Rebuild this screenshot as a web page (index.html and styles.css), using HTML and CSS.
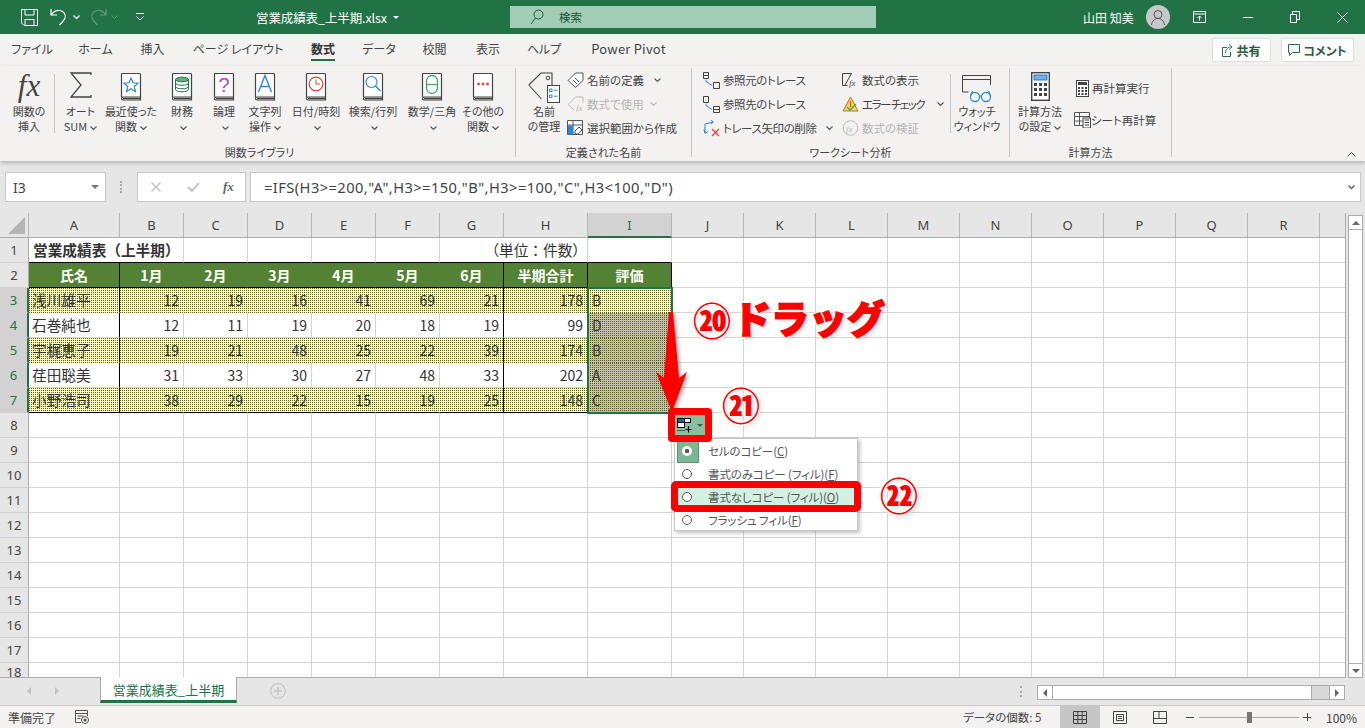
FILE: index.html
```html
<!DOCTYPE html>
<html lang="ja">
<head>
<meta charset="utf-8">
<title>営業成績表_上半期.xlsx - Excel</title>
<link rel="stylesheet" href="styles.css">
</head>
<body>
<svg class="defs" width="0" height="0" aria-hidden="true">
  <defs>
    <symbol id="book" viewBox="0 0 22 29">
      <path d="M1.500 25V2.500q0-1 1-1h17q1 0 1 1v25.500H3q-1.500 0-1.500-1.500T3 25h17.500" fill="#fff" stroke="#444" stroke-width="1.200"/>
      <path d="M3 26.500h17.500" stroke="#444" stroke-width="1.500"/>
    </symbol>
    <symbol id="chev" viewBox="0 0 7 4">
      <path d="M.5.5l3 3 3-3" fill="none" stroke="#555" stroke-width="1.100"/>
    </symbol>
    <symbol id="chevg" viewBox="0 0 7 4">
      <path d="M.5.5l3 3 3-3" fill="none" stroke="#bbb" stroke-width="1.100"/>
    </symbol>
  </defs>
</svg>
<div class="app">
  <header class="titlebar">
    <div class="qat">
      <svg class="i-save" width="17" height="17" viewBox="0 0 17 17"><path d="M.5.500h16v16H3L.5 14z" fill="none" stroke="#fff"/><path d="M4 .5v5.500h9V.5M4 16.500V10.500h9v6" fill="none" stroke="#fff"/></svg>
      <svg class="i-undo" width="18" height="18" viewBox="0 0 18 18"><path d="M1 1v6h6M1.500 6.500C4 3 7 2 10 2.500c4 .8 6 4 5 7.500-.7 2-2.500 4-5.500 7" fill="none" stroke="#fff" stroke-width="1.200"/></svg>
      <svg class="i-cv" width="7" height="4" viewBox="0 0 7 4"><path d="M.5.5l3 3 3-3" fill="none" stroke="#fff" stroke-width="1.200"/></svg>
      <svg class="i-redo" width="18" height="18" viewBox="0 0 18 18"><path d="M17 1v6h-6M16.500 6.500C14 3 11 2 8 2.500c-4 .8-6 4-5 7.500.7 2 2.500 4 5.500 7" fill="none" stroke="#5f9c7c" stroke-width="1.200"/></svg>
      <svg class="i-cv2" width="7" height="4" viewBox="0 0 7 4"><path d="M.5.5l3 3 3-3" fill="none" stroke="#5f9c7c"/></svg>
      <svg class="i-cust" width="8" height="8" viewBox="0 0 8 8"><path d="M0 .5h8M.5 3.500L4 7l3.500-3.500" fill="none" stroke="#fff"/></svg>
    </div>
    <div class="docname">営業成績表_上半期.xlsx<span class="caret-w"></span></div>
    <div class="search">
      <svg width="14" height="16" viewBox="0 0 14 16"><circle cx="8.500" cy="5.500" r="4.500" fill="none" stroke="#1e5c3a"/><path d="M5.500 9L1 15" stroke="#1e5c3a"/></svg>
      <span>検索</span>
    </div>
    <div class="user">山田 知美</div>
    <div class="avatar"><svg width="24" height="24" viewBox="0 0 24 24"><circle cx="12" cy="12" r="12" fill="#c8c8c8"/><circle cx="12" cy="9.500" r="4" fill="none" stroke="#555"/><path d="M5.500 20c.5-4 3-6.500 6.500-6.500s6 2.500 6.500 6.500" fill="none" stroke="#555"/></svg></div>
    <div class="winbtns">
      <svg width="13" height="12" viewBox="0 0 13 12"><path d="M.5.500h12v11H.5zM.5 3h12M6.500 9.500V5M4.500 7l2-2 2 2" fill="none" stroke="#fff"/></svg>
      <svg width="10" height="1" viewBox="0 0 10 1"><path d="M0 .5h10" stroke="#fff"/></svg>
      <svg width="10" height="12" viewBox="0 0 10 12"><path d="M.5 3.500h6v8h-6zM2.500 3.500v-3h7v8h-3" fill="none" stroke="#fff"/></svg>
      <svg width="11" height="11" viewBox="0 0 11 11"><path d="M.5.500l10 10M10.500.500l-10 10" stroke="#fff"/></svg>
    </div>
  </header>

  <nav class="tabs">
    <span>ファイル</span><span>ホーム</span><span>挿入</span><span>ページ レイアウト</span><span class="on">数式</span><span>データ</span><span>校閲</span><span>表示</span><span>ヘルプ</span><span class="pp">Power Pivot</span>
    <div class="tab-actions">
      <button class="share"><svg width="11" height="13" viewBox="0 0 11 13"><path d="M5 3.500H.5v9h8V8M3.500 9c0-3.500 2.500-6 5-6M7 .5l3 2.500-3 2.500" fill="none" stroke="#217346"/></svg>共有</button>
      <button class="comment"><svg width="12" height="12" viewBox="0 0 12 12"><path d="M.5.500h11v8H4.500l-3 3v-3h-1z" fill="none" stroke="#217346"/></svg>コメント</button>
    </div>
  </nav>

  <section class="ribbon">
    <div class="group g1">
      <div class="gbody">
        <div class="big w50"><div class="ic fx">fx</div><div class="lb">関数の<br>挿入</div></div>
        <div class="vsep"></div>
        <div class="big w51"><div class="ic"><svg width="22" height="26" viewBox="0 0 22 26"><path d="M21 3V1H1l10 12L1 25h20v-2" fill="none" stroke="#444" stroke-width="1.300"/></svg></div><div class="lb">オート<br>SUM<svg class="cv" width="7" height="4"><use href="#chev"/></svg></div></div>
        <div class="big w50"><div class="ic"><svg width="22" height="29"><use href="#book"/><path d="M11 6l2 4.800 5 .4-3.800 3.300 1.200 5L11 16.800 6.600 19.500l1.200-5L4 11.200l5-.4z" fill="none" stroke="#2b88d8" stroke-width="1.200"/></svg></div><div class="lb">最近使った<br>関数<svg class="cv" width="7" height="4"><use href="#chev"/></svg></div></div>
        <div class="big w52"><div class="ic"><svg width="22" height="29"><use href="#book"/><ellipse cx="11" cy="7.500" rx="6.500" ry="2.300" fill="#5fb37f" stroke="#217346"/><path d="M4.500 7.500v10c0 3 13 3 13 0v-10M4.500 11c0 3 13 3 13 0M4.500 14.500c0 3 13 3 13 0" fill="none" stroke="#217346"/></svg></div><div class="lb">財務<br><svg class="cv" width="7" height="4"><use href="#chev"/></svg></div></div>
        <div class="big w32"><div class="ic"><svg width="22" height="29"><use href="#book"/><text x="11" y="20" class="q">?</text></svg></div><div class="lb">論理<br><svg class="cv" width="7" height="4"><use href="#chev"/></svg></div></div>
        <div class="big w50"><div class="ic"><svg width="22" height="29"><use href="#book"/><path d="M4.500 20L11 3.500 17.500 20M6.500 14.500h9" fill="none" stroke="#2b88d8" stroke-width="1.400"/></svg></div><div class="lb">文字列<br>操作<svg class="cv" width="7" height="4"><use href="#chev"/></svg></div></div>
        <div class="big w52"><div class="ic"><svg width="22" height="29"><use href="#book"/><circle cx="11" cy="12" r="6.800" fill="none" stroke="#e8413c" stroke-width="1.200"/><path d="M11 7.500V12h4" fill="none" stroke="#e8413c"/></svg></div><div class="lb nw">日付/時刻<br><svg class="cv" width="7" height="4"><use href="#chev"/></svg></div></div>
        <div class="big w62"><div class="ic"><svg width="22" height="29"><use href="#book"/><circle cx="9.500" cy="10" r="5.500" fill="none" stroke="#2b88d8" stroke-width="1.200"/><path d="M13.500 14l5 5" stroke="#2b88d8" stroke-width="1.400"/></svg></div><div class="lb nw">検索/行列<br><svg class="cv" width="7" height="4"><use href="#chev"/></svg></div></div>
        <div class="big w56"><div class="ic"><svg width="22" height="29"><use href="#book"/><rect x="5.500" y="3.500" width="11" height="18" rx="5.500" fill="none" stroke="#3fa66a" stroke-width="1.300"/><path d="M5.500 12.500h11" stroke="#3fa66a" stroke-width="1.300"/></svg></div><div class="lb nw">数学/三角<br><svg class="cv" width="7" height="4"><use href="#chev"/></svg></div></div>
        <div class="big w46"><div class="ic"><svg width="22" height="29"><use href="#book"/><circle cx="6.500" cy="12" r="1.400" fill="#e8413c"/><circle cx="11" cy="12" r="1.400" fill="#e8413c"/><circle cx="15.500" cy="12" r="1.400" fill="#e8413c"/></svg></div><div class="lb nw">その他の<br>関数<svg class="cv" width="7" height="4"><use href="#chev"/></svg></div></div>
      </div>
      <div class="glabel">関数ライブラリ</div>
    </div>

    <div class="group g2">
      <div class="gbody">
        <div class="big wname"><div class="ic"><svg width="32" height="32" viewBox="0 0 32 32"><path d="M.8 13L13 1h11v13M13.500 27L.8 13" fill="none" stroke="#444" stroke-width="1.100"/><circle cx="20" cy="6" r="1.800" fill="none" stroke="#444"/><rect x="19.500" y="13.500" width="12" height="17" fill="#fff" stroke="#444"/><path d="M21.500 17h2.500v2.500h-2.500zM21.500 23h2.500v2.500h-2.500z" fill="none" stroke="#2b88d8"/><path d="M26 18.200h3.500M26 24.200h3.500" stroke="#2b88d8"/></svg></div><div class="lb">名前<br>の管理</div></div>
        <div class="smalls">
          <div class="sm"><svg width="17" height="16" viewBox="0 0 17 16"><path d="M1 8.500L8.500 1H16v7.500L8.500 15.500zM6 8l4 4M8 6l4 4" fill="#fff" stroke="#555"/></svg>名前の定義<svg class="cv2" width="7" height="4"><use href="#chev"/></svg></div>
          <div class="sm dis"><svg width="17" height="16" viewBox="0 0 17 16"><path d="M1 8.500L8.500 1H16v5M7 14L1 8.500" fill="none" stroke="#bbb"/><text x="9" y="15" class="fxs">fx</text></svg>数式で使用<svg class="cv3" width="7" height="4"><use href="#chevg"/></svg></div>
          <div class="sm"><svg width="17" height="16" viewBox="0 0 17 16"><path d="M.5.500h15v14H.5zM.5 5h15M6 .5v14" fill="#fff" stroke="#555"/><rect x="1" y="5.500" width="5" height="9" fill="#2b88d8"/><path d="M8 11l4-4 3 3-4 4H8z" fill="#fff" stroke="#555"/></svg>選択範囲から作成</div>
        </div>
      </div>
      <div class="glabel">定義された名前</div>
    </div>

    <div class="group g3">
      <div class="gbody">
        <div class="smalls c1">
          <div class="sm"><svg width="17" height="17" viewBox="0 0 17 17"><path d="M.5.500h5v6h-5zM.5 3.500h5M10.500 10.500h6v6h-6z" fill="none" stroke="#444"/><path d="M3 7.500v2l6 4" fill="none" stroke="#2b88d8"/></svg>参照元のトレース</div>
          <div class="sm"><svg width="17" height="17" viewBox="0 0 17 17"><path d="M.5.500h5v6h-5zM10.500 10.500h6v6h-6zM10.500 13.500h6" fill="none" stroke="#444"/><path d="M3 7.500v2l6 4" fill="none" stroke="#2b88d8"/></svg>参照先のトレース</div>
          <div class="sm"><svg width="17" height="17" viewBox="0 0 17 17"><path d="M2 13V4l8-2M8 0l2.500 2L8 4M1 9.500l1 4 3-2" fill="none" stroke="#2b88d8"/><path d="M9 9l7 7M16 9l-7 7" stroke="#e8413c" stroke-width="1.300"/></svg>トレース矢印の削除<svg class="cv4" width="7" height="4"><use href="#chev"/></svg></div>
        </div>
        <div class="smalls c2">
          <div class="sm"><svg width="17" height="16" viewBox="0 0 17 16"><path d="M.5 1.500h9M.5 1.500v12h5M9.500 1.500L3 13" fill="none" stroke="#444"/><text x="7" y="14" class="fxd">fx</text></svg>数式の表示</div>
          <div class="sm ec"><svg width="17" height="16" viewBox="0 0 17 16"><path d="M8.500 1L1 15h15z" fill="#f4d35e" stroke="#c4721c"/><path d="M8.500 5v6" stroke="#c4721c" stroke-width="1.400"/><path d="M5 11l3 3 6-6" fill="none" stroke="#3fa66a" stroke-width="1.300"/></svg>エラー チェック<svg class="cv5" width="7" height="4"><use href="#chev"/></svg></div>
          <div class="sm dis"><svg width="17" height="16" viewBox="0 0 17 16"><circle cx="8.500" cy="8" r="7.300" fill="none" stroke="#bbb"/><text x="4" y="12" class="fxg">fx</text></svg>数式の検証</div>
        </div>
        <div class="vsep2"></div>
        <div class="big wwatch"><div class="ic"><svg width="30" height="29" viewBox="0 0 30 29"><path d="M.5 17V.5h28V10M.5 4.500h28M.5 17h6" fill="none" stroke="#444"/><circle cx="13" cy="22" r="4.500" fill="#fff" stroke="#2b88d8" stroke-width="1.300"/><circle cx="24" cy="22" r="4.500" fill="#fff" stroke="#2b88d8" stroke-width="1.300"/><path d="M17.500 21h2M8.500 21l2-5M28.500 21l-2-5" fill="none" stroke="#2b88d8" stroke-width="1.200"/></svg></div><div class="lb nw">ウォッチ<br>ウィンドウ</div></div>
      </div>
      <div class="glabel">ワークシート分析</div>
    </div>

    <div class="group g4">
      <div class="gbody">
        <div class="big wcalc"><div class="ic"><svg width="19" height="29" viewBox="0 0 19 29"><rect x=".7" y=".7" width="17.600" height="27.600" fill="#fff" stroke="#444" stroke-width="1.400"/><rect x="3" y="3" width="13" height="5" fill="#6fb0e6" stroke="#2b78c2"/><path d="M3 11h3v3H3zM8 11h3v3H8zM13 11h3v3h-3zM3 16h3v3H3zM8 16h3v3H8zM13 16h3v3h-3zM3 21h3v3H3zM8 21h3v3H8zM13 21h3v3h-3z" fill="#444"/></svg></div><div class="lb nw">計算方法<br>の設定<svg class="cv" width="7" height="4"><use href="#chev"/></svg></div></div>
        <div class="smalls c3">
          <div class="sm"><svg width="13" height="17" viewBox="0 0 13 17"><rect x=".5" y=".5" width="12" height="16" fill="#fff" stroke="#444"/><rect x="2" y="2" width="9" height="3" fill="#444"/><path d="M2 7h2v2H2zM5.500 7h2v2h-2zM9 7h2v2H9zM2 10h2v2H2zM5.500 10h2v2h-2zM9 10h2v2H9zM2 13h2v2H2zM5.500 13h2v2h-2zM9 13h2v2H9z" fill="#444"/></svg>再計算実行</div>
          <div class="sm s2"><svg width="17" height="16" viewBox="0 0 17 16"><path d="M.5.500h15v13H.5zM.5 4.500h15M5.500.5v13M.5 9h8" fill="#fff" stroke="#555"/><rect x="9" y="6" width="7.500" height="10" fill="#fff" stroke="#444"/><path d="M10.500 8h4.500M10.500 10.500h4.500M10.500 13h4.500" stroke="#444" stroke-width="1.200"/></svg>シート再計算</div>
        </div>
      </div>
      <div class="glabel">計算方法</div>
    </div>
    <svg class="collapse" width="9" height="5" viewBox="0 0 9 5"><path d="M.5 4.500l4-4 4 4" fill="none" stroke="#444"/></svg>
  </section>

  <section class="fbar">
    <div class="namebox">I3<span class="caret-g"></span></div>
    <div class="fdots"></div>
    <div class="fbtns">
      <svg width="10" height="10" viewBox="0 0 10 10"><path d="M.5.500l9 9M9.500.500l-9 9" stroke="#c0c0c0" stroke-width="1.400"/></svg>
      <svg width="13" height="10" viewBox="0 0 13 10"><path d="M1 5l4 4 7-8" fill="none" stroke="#c0c0c0" stroke-width="1.800"/></svg>
      <span class="ffx">fx</span>
    </div>
    <div class="finput"><span>=IFS(H3&gt;=200,"A",H3&gt;=150,"B",H3&gt;=100,"C",H3&lt;100,"D")</span>
      <svg width="7" height="5" viewBox="0 0 7 5"><path d="M.5.500l3 3 3-3" fill="none" stroke="#666" stroke-width="1.500"/></svg>
    </div>
  </section>

  <section class="sheetarea">
    <div class="grid">
      <table>
        <colgroup><col class="crh"><col class="ca"><col class="cb"><col class="cb"><col class="cb"><col class="cb"><col class="cb"><col class="cb"><col class="ch"><col class="ch"><col class="cj"><col class="cj"><col class="cj"><col class="cj"><col class="cj"><col class="cj"><col class="cj"><col class="cj"><col class="cj"><col class="cs"></colgroup>
        <tr class="colhead"><th class="corner"><span></span></th><th>A</th><th>B</th><th>C</th><th>D</th><th>E</th><th>F</th><th>G</th><th>H</th><th class="sel">I</th><th>J</th><th>K</th><th>L</th><th>M</th><th>N</th><th>O</th><th>P</th><th>Q</th><th>R</th><th></th></tr>
        <tr class="r1"><th class="rh">1</th><td colspan="2" class="title">営業成績表（上半期）</td><td></td><td></td><td></td><td></td><td colspan="2" class="unit">（単位：件数）</td><td></td><td></td><td></td><td></td><td></td><td></td><td></td><td></td><td></td><td></td><td></td></tr>
        <tr class="head"><th class="rh">2</th><td class="bk">氏名</td><td>1月</td><td>2月</td><td>3月</td><td>4月</td><td>5月</td><td class="bk">6月</td><td class="bk">半期合計</td><td class="bk">評価</td><td></td><td></td><td></td><td></td><td></td><td></td><td></td><td></td><td></td><td></td></tr>
        <tr class="d p"><th class="rh sel">3</th><td class="t bk">浅川雄平</td><td>12</td><td>19</td><td>16</td><td>41</td><td>69</td><td class="bk">21</td><td class="bk">178</td><td class="t e">B</td><td></td><td></td><td></td><td></td><td></td><td></td><td></td><td></td><td></td><td></td></tr>
        <tr class="d"><th class="rh sel">4</th><td class="t bk">石巻純也</td><td>12</td><td>11</td><td>19</td><td>20</td><td>18</td><td class="bk">19</td><td class="bk">99</td><td class="t e">D</td><td></td><td></td><td></td><td></td><td></td><td></td><td></td><td></td><td></td><td></td></tr>
        <tr class="d p"><th class="rh sel">5</th><td class="t bk">宇梶恵子</td><td>19</td><td>21</td><td>48</td><td>25</td><td>22</td><td class="bk">39</td><td class="bk">174</td><td class="t e">B</td><td></td><td></td><td></td><td></td><td></td><td></td><td></td><td></td><td></td><td></td></tr>
        <tr class="d"><th class="rh sel">6</th><td class="t bk">荏田聡美</td><td>31</td><td>33</td><td>30</td><td>27</td><td>48</td><td class="bk">33</td><td class="bk">202</td><td class="t e">A</td><td></td><td></td><td></td><td></td><td></td><td></td><td></td><td></td><td></td><td></td></tr>
        <tr class="d p last"><th class="rh sel">7</th><td class="t bk">小野浩司</td><td>38</td><td>29</td><td>22</td><td>15</td><td>19</td><td class="bk">25</td><td class="bk">148</td><td class="t e">C</td><td></td><td></td><td></td><td></td><td></td><td></td><td></td><td></td><td></td><td></td></tr>
        <tr><th class="rh">8</th><td></td><td></td><td></td><td></td><td></td><td></td><td></td><td></td><td></td><td></td><td></td><td></td><td></td><td></td><td></td><td></td><td></td><td></td><td></td></tr>
        <tr><th class="rh">9</th><td></td><td></td><td></td><td></td><td></td><td></td><td></td><td></td><td></td><td></td><td></td><td></td><td></td><td></td><td></td><td></td><td></td><td></td><td></td></tr>
        <tr><th class="rh">10</th><td></td><td></td><td></td><td></td><td></td><td></td><td></td><td></td><td></td><td></td><td></td><td></td><td></td><td></td><td></td><td></td><td></td><td></td><td></td></tr>
        <tr><th class="rh">11</th><td></td><td></td><td></td><td></td><td></td><td></td><td></td><td></td><td></td><td></td><td></td><td></td><td></td><td></td><td></td><td></td><td></td><td></td><td></td></tr>
        <tr><th class="rh">12</th><td></td><td></td><td></td><td></td><td></td><td></td><td></td><td></td><td></td><td></td><td></td><td></td><td></td><td></td><td></td><td></td><td></td><td></td><td></td></tr>
        <tr><th class="rh">13</th><td></td><td></td><td></td><td></td><td></td><td></td><td></td><td></td><td></td><td></td><td></td><td></td><td></td><td></td><td></td><td></td><td></td><td></td><td></td></tr>
        <tr><th class="rh">14</th><td></td><td></td><td></td><td></td><td></td><td></td><td></td><td></td><td></td><td></td><td></td><td></td><td></td><td></td><td></td><td></td><td></td><td></td><td></td></tr>
        <tr><th class="rh">15</th><td></td><td></td><td></td><td></td><td></td><td></td><td></td><td></td><td></td><td></td><td></td><td></td><td></td><td></td><td></td><td></td><td></td><td></td><td></td></tr>
        <tr><th class="rh">16</th><td></td><td></td><td></td><td></td><td></td><td></td><td></td><td></td><td></td><td></td><td></td><td></td><td></td><td></td><td></td><td></td><td></td><td></td><td></td></tr>
        <tr><th class="rh">17</th><td></td><td></td><td></td><td></td><td></td><td></td><td></td><td></td><td></td><td></td><td></td><td></td><td></td><td></td><td></td><td></td><td></td><td></td><td></td></tr>
        <tr class="r18"><th class="rh">18</th><td></td><td></td><td></td><td></td><td></td><td></td><td></td><td></td><td></td><td></td><td></td><td></td><td></td><td></td><td></td><td></td><td></td><td></td><td></td></tr>
      </table>
    </div>
    <div class="vscroll">
      <div class="sbtn"><span class="tri-up"></span></div>
      <div class="vthumb"></div>
      <div class="sbtn"><span class="tri-dn"></span></div>
    </div>
  </section>

  <section class="sheettabs">
    <div class="tabnav"><span class="tl"></span><span class="tr"></span></div>
    <div class="sheettab">営業成績表_上半期</div>
    <svg class="addsheet" width="16" height="16" viewBox="0 0 16 16"><circle cx="8" cy="8" r="7.300" fill="none" stroke="#c6c6c6" stroke-width="1.200"/><path d="M8 4v8M4 8h8" stroke="#c6c6c6" stroke-width="1.600"/></svg>
    <div class="spacer"></div>
    <div class="hdots"></div>
    <div class="hscroll">
      <div class="hbtn"><span class="tl dk"></span></div>
      <div class="hthumb"></div>
      <div class="htrack"></div>
      <div class="hbtn rb"><span class="tr dk"></span></div>
    </div>
  </section>

  <footer class="status">
    <span class="ready">準備完了</span>
    <svg class="macro" width="14" height="14" viewBox="0 0 14 14"><path d="M6 12.500H.5V.5h12V6M.5 3.500h12M2.500 6h6M2.500 8.500h3" fill="none" stroke="#555"/><circle cx="10" cy="10" r="3.500" fill="none" stroke="#555"/><circle cx="10" cy="10" r="1.500" fill="#555"/></svg>
    <div class="spacer"></div>
    <span class="count">データの個数: 5</span>
    <div class="view on"><svg width="14" height="13" viewBox="0 0 14 13"><path d="M.5.500h13v12H.5zM.5 4.500h13M.5 8.500h13M4.800.5v12M9.200.5v12" fill="none" stroke="#444"/></svg></div>
    <div class="view"><svg width="14" height="13" viewBox="0 0 14 13"><path d="M.5.500h13v12H.5zM3.500 3.500h7v6h-7zM5 5.500h4M5 7.500h4" fill="none" stroke="#444"/></svg></div>
    <div class="view"><svg width="14" height="13" viewBox="0 0 14 13"><path d="M.5.500h13v12H.5zM.5 7.500h13M6 .5v7" fill="none" stroke="#444"/></svg></div>
    <div class="zoom">
      <span class="zm"></span>
      <div class="slider"><span class="knob"></span></div>
      <span class="zp"></span>
    </div>
    <span class="pct">100%</span>
  </footer>

  <!-- overlays -->
  <div class="selrange"></div>
  <div class="seldim"></div>
  <svg class="arrow" width="36" height="104" viewBox="0 0 36 104"><path d="M15 2h4L25 68l8-6-15 40L2 62l8 6z" fill="#ff0000"/></svg>
  <div class="anno a20">⑳</div>
  <div class="anno drag">ドラッグ</div>
  <div class="anno a21">㉑</div>
  <div class="anno a22">㉒</div>
  <div class="pastebtn">
    <svg width="16" height="15" viewBox="0 0 16 15"><rect x=".5" y=".5" width="7" height="4" fill="#1f5fd0" stroke="#000"/><rect x="7.500" y=".5" width="6" height="4" fill="#fff" stroke="#000"/><rect x=".5" y="4.500" width="7" height="5" fill="#fff" stroke="#000"/><path d="M.5 12.500h7" stroke="#000" stroke-dasharray="1 1"/><path d="M11.500 8v6.500M8.500 11.500h6" stroke="#000" stroke-width="1.200"/></svg>
    <span class="caret-d"></span>
  </div>
  <div class="fillmenu">
    <div class="mi"><span class="rad chk"><i></i></span>セルのコピー(<u>C</u>)</div>
    <div class="mi"><span class="rad"></span>書式のみコピー (フィル)(<u>F</u>)</div>
    <div class="mi hi"><span class="rad"></span>書式なしコピー (フィル)(<u>O</u>)</div>
    <div class="mi"><span class="rad"></span>フラッシュ フィル(<u>F</u>)</div>
  </div>
  <div class="redbox"></div>
</div>
</body>
</html>
```

FILE: styles.css
```css
* { box-sizing: border-box; }
html, body { margin: 0; padding: 0; height: 100%; overflow: hidden; background: #e6e6e6; }
body { font-family: "Noto Sans CJK JP", "Noto Sans", sans-serif; font-feature-settings: "palt"; color: #444; }
.defs { position: absolute; }
.app { position: relative; width: 1365px; height: 728px; overflow: hidden; display: flex; flex-direction: column; }

/* title bar */
.titlebar { height: 34px; background: #217346; color: #fff; display: flex; align-items: center; font-size: 12px; flex: none; }
.qat { width: 256px; display: flex; align-items: center; padding-left: 21px; flex: none; }
.qat svg { flex: none; }
.i-save { margin-right: 12px; }
.i-cv { margin: 0 0 0 5px; }
.i-redo { margin-left: 9px; }
.i-cv2 { margin-left: 4px; }
.i-cust { margin-left: 18px; }
.docname { width: 254px; flex: none; display: flex; align-items: center; font-size: 12.500px; letter-spacing: -.1px; }
.caret-w { width: 0; height: 0; border: 3px solid transparent; border-top: 3px solid #fff; border-bottom: 0; margin-left: 6px; }
.search { width: 366px; height: 22px; background: #a1cdb5; color: #1e4e33; display: flex; align-items: center; padding-left: 20px; flex: none; font-size: 11.500px; }
.search span { margin-left: 15px; }
.user { margin-left: 207px; width: 61px; font-size: 12px; flex: none; }
.avatar { width: 24px; height: 24px; flex: none; margin-left: 2px; }
.winbtns { display: flex; align-items: center; flex: 1; padding-left: 23px; gap: 0; justify-content: space-between; padding-right: 17px; }

/* ribbon tabs */
.tabs { height: 32px; background: #f3f2f1; display: grid; grid-template-columns: 64px 63px 51px 120px 50px 62px 49px 58px 54px 115px 1fr; align-items: center; justify-items: center; font-size: 12px; color: #444; flex: none; }
.tabs > span { position: relative; height: 32px; line-height: 30px; white-space: nowrap; }
.tabs .on { font-weight: 700; color: #333; }
.tabs .on::after { content: ""; position: absolute; left: 0; right: 0; bottom: 5px; height: 2px; background: #217346; }
.tabs .pp { font-size: 13px; letter-spacing: .2px; }
.tab-actions { justify-self: end; display: flex; gap: 10px; padding-right: 11px; }
.tab-actions button { height: 24px; background: #fff; border: 1px solid #e1dfdd; border-radius: 2px; font: 700 12px "Noto Sans CJK JP", sans-serif; font-feature-settings: "palt"; color: #2b5d42; display: flex; align-items: center; justify-content: center; gap: 3px; padding: 0; }
.share { width: 59px; }
.comment { width: 73px; }

/* ribbon */
.ribbon { height: 95px; background: #f3f2f1; display: flex; flex: none; box-shadow: 0 2px 4px rgba(0,0,0,.22); position: relative; z-index: 2; }
.group { display: flex; flex-direction: column; border-right: 1px solid #c8c6c4; margin: 2px 0 4px; flex: none; }
.g1 { width: 516px; padding-left: 4px; }
.g2 { width: 176px; }
.g3 { width: 318px; }
.g4 { width: 162px; }
.gbody { height: 76px; display: flex; flex: none; }
.glabel { height: 13px; text-align: center; font-size: 11px; line-height: 16px; color: #444; flex: none; }
.big { display: flex; flex-direction: column; align-items: center; flex: none; }
.ic { height: 34px; padding-top: 4px; display: flex; justify-content: center; }
.ic svg { flex: none; }
.lb { font-size: 11px; line-height: 15px; text-align: center; white-space: nowrap; color: #444; margin-top: 2px; }
.cv { margin-left: 3px; vertical-align: 1px; }
.w50 { width: 50px; } .w51 { width: 51px; } .w52 { width: 52px; } .w32 { width: 32px; } .w62 { width: 62px; } .w56 { width: 56px; } .w46 { width: 46px; }
.fx { font: italic 31px/1 "Liberation Serif", serif; color: #444; padding-top: 2px; }
.vsep { width: 1px; height: 59px; background: #c8c6c4; margin-top: 6px; flex: none; }
.q { font: 20px "Liberation Sans", sans-serif; fill: #b146c2; text-anchor: middle; }
.wname { width: 52px; margin-left: 2px; }
.smalls { display: flex; flex-direction: column; padding-top: 0; flex: none; }
.sm { height: 24px; display: flex; align-items: center; font-size: 11.500px; gap: 3px; white-space: nowrap; color: #444; }
.sm svg { flex: none; }
.sm.dis { color: #b4b4b4; }
.sm.ec { letter-spacing: -1.500px; }
.g2 .smalls { margin-left: -3px; }
.cv2 { margin-left: 7px; } .cv3 { margin-left: 3px; } .cv4 { margin-left: 6px; } .cv5 { margin-left: 10px; }
.fxs, .fxd, .fxg { font: italic 9px "Liberation Serif", serif; fill: #bbb; }
.fxd { fill: #444; }
.c1 { margin-left: 11px; width: 139px; }
.c1 .sm { letter-spacing: -.4px; }
.c2 { width: 108px; }
.vsep2 { width: 1px; height: 59px; background: #c8c6c4; margin-top: 6px; flex: none; }
.wwatch { width: 52px; }
.wwatch .ic { padding-top: 7px; }
.wcalc { width: 60px; }
.c3 { margin-left: 4px; padding-top: 8px; gap: 8px; }
.c3 .sm { margin-left: 2px; }
.c3 .s2 { margin-left: 0; gap: 0; }
.collapse { position: absolute; right: 9px; top: 86px; }

/* formula bar */
.fbar { height: 52px; padding: 11px 4px 11px 5px; display: flex; background: #e6e6e6; flex: none; }
.namebox { width: 101px; height: 30px; background: #fff; border: 1px solid #c8c8c8; font-size: 14px; color: #444; padding-left: 7px; line-height: 30px; position: relative; font-family: "Noto Sans", sans-serif; }
.caret-g { position: absolute; right: 6px; top: 12px; border: 4px solid transparent; border-top: 4px solid #777; border-bottom: 0; }
.fdots { width: 3px; height: 12px; margin: 9px 14px 0 14px; border-left: 2px dotted #aaa; }
.fbtns { width: 109px; height: 30px; background: #fff; border: 1px solid #c8c8c8; display: flex; align-items: center; padding-left: 13px; margin-right: 4px; flex: none; }
.fbtns svg:nth-child(2) { margin-left: 26px; }
.ffx { font: italic 700 13px "Liberation Serif", serif; color: #666; margin-left: 23px; }
.finput { flex: 1; height: 30px; background: #fff; border: 1px solid #c8c8c8; display: flex; align-items: center; justify-content: space-between; padding: 0 5px 0 13px; font: 14.670px "Noto Sans", sans-serif; letter-spacing: .44px; color: #444; }

/* sheet */
.sheetarea { height: 465px; display: flex; flex: none; }
.grid { width: 1346px; height: 465px; overflow: hidden; flex: none; border-right: 1px solid #ababab; border-bottom: 1px solid #ababab; background: #e6e6e6; }
table { border-collapse: separate; border-spacing: 0; table-layout: fixed; width: 1346px; }
.crh { width: 29px; } .ca { width: 91px; } .cb { width: 64px; } .ch { width: 84px; } .cj { width: 72px; } .cs { width: 26px; }
tr { height: 25px; }
td { height: 25px; padding: 0 4px; background: #fff; border-right: 1px solid #d4d4d4; border-bottom: 1px solid #d4d4d4; font-size: 14px; color: #333; white-space: nowrap; overflow: hidden; line-height: 24px; }
.colhead th { height: 25px; background: #e6e6e6; border-right: 1px solid #b5b5b5; border-bottom: 1px solid #ababab; font: 400 13px "Noto Sans", sans-serif; color: #444; padding: 0; }
.colhead th.sel { background: #d2d2d2; color: #217346; border-bottom: 2px solid #217346; }
.corner { position: relative; }
.corner span { position: absolute; right: 3px; bottom: 3px; width: 0; height: 0; border-left: 17px solid transparent; border-bottom: 17px solid #b5b5b5; }
.rh { background: #e6e6e6; border-right: 1px solid #ababab; border-bottom: 1px solid #d0d0d0; font: 400 13px "Noto Sans", sans-serif; color: #444; padding: 0; }
.r18 .rh { vertical-align: top; padding-top: 3px; line-height: 1; }
.rh.sel { background: #d2d2d2; color: #217346; border-right: 2px solid #217346; }
.title { font-weight: 700; font-size: 14.670px; border-bottom-color: #000; font-feature-settings: normal; }
.unit { text-align: right; font-size: 14.670px; border-bottom-color: #000; font-feature-settings: normal; padding-right: 0; }
.r1 td:nth-child(n+3):nth-child(-n+6) { border-bottom-color: #000; }
.r1 td:nth-child(8) { border-bottom-color: #000; }
.head td:nth-child(-n+10) { background: #548235; color: #fff; font-weight: 700; text-align: center; border-right-color: #548235; border-bottom-color: #000; font-feature-settings: normal; }
.head td.bk { border-right-color: #000; }
.d td:nth-child(-n+9) { text-align: right; }
.d td.t { text-align: left; font-feature-settings: normal; }
.d td.t:first-of-type { font-size: 14.670px; padding-left: 3px; }
.d td.e, .p td:nth-child(-n+10) { background: conic-gradient(at 1px 1px, #fbfad2 75%, #62620a 0) 0 0 / 2px 2px; border-right-color: transparent; border-bottom-color: transparent; }
.d td.bk { border-right-color: #000; }
.last td:nth-child(-n+10) { border-bottom-color: #000; }
.d td:nth-child(n+3):nth-child(-n+7) { font-family: "Noto Sans CJK JP", sans-serif; }

/* scrollbar */
.vscroll { flex: 1; padding: 2px 2px 0 2px; display: flex; flex-direction: column; background: #e6e6e6; }
.sbtn { height: 15px; background: #fff; border: 1px solid #ababab; display: flex; align-items: center; justify-content: center; flex: none; }
.tri-up { border: 4px solid transparent; border-bottom: 4px solid #666; border-top: 0; }
.tri-dn { border: 4px solid transparent; border-top: 4px solid #666; border-bottom: 0; }
.vthumb { flex: 1; background: #fff; border-left: 1px solid #ababab; border-right: 1px solid #ababab; }

/* sheet tabs */
.sheettabs { height: 28px; background: #e6e6e6; display: flex; align-items: flex-start; flex: none; border-bottom: 1px solid #c8c8c8; }
.tabnav { width: 100px; height: 26px; display: flex; align-items: center; padding-left: 27px; gap: 24px; flex: none; }
.tl { border: 4px solid transparent; border-right: 4px solid #c0c0c0; border-left: 0; }
.tr { border: 4px solid transparent; border-left: 4px solid #c0c0c0; border-right: 0; }
.tl.dk { border-right-color: #666; }
.tr.dk { border-left-color: #666; }
.sheettab { width: 137px; height: 26px; background: #fff; border-left: 1px solid #ababab; border-right: 1px solid #ababab; border-bottom: 3px solid #217346; color: #217346; font-size: 13px; text-align: center; line-height: 25px; margin-top: -1px; flex: none; font-feature-settings: normal; }
.addsheet { margin: 5px 0 0 33px; flex: none; }
.spacer { flex: 1; }
.hdots { width: 3px; height: 11px; border-left: 2px dotted #aaa; margin: 8px 14px 0 0; flex: none; }
.hscroll { width: 308px; height: 15px; margin: 7px 20px 0 0; display: flex; border: 1px solid #ababab; flex: none; background: #fff; }
.hbtn { width: 15px; display: flex; align-items: center; justify-content: center; background: #fff; flex: none; border-right: 1px solid #ababab; }
.hbtn.rb { border-right: 0; border-left: 1px solid #ababab; }
.hthumb { flex: 1; background: #fff; border-right: 1px solid #ababab; }
.htrack { width: 17px; background: #d8d8d8; }

/* status */
.status { flex: 1; background: #f3f2f1; display: flex; align-items: center; font-size: 12px; color: #444; }
.ready { margin-left: 8px; width: 67px; }
.macro { flex: none; }
.count { width: 97px; font-size: 11.500px; flex: none; }
.view { width: 40px; height: 22px; display: flex; align-items: center; justify-content: center; flex: none; }
.view.on { background: #c6c6c6; }
.zoom { display: flex; align-items: center; margin-left: 6px; width: 128px; flex: none; }
.zm { width: 8px; height: 1px; background: #444; flex: none; }
.slider { width: 100px; height: 1px; background: #a8a8a8; margin: 0 4px 0 5px; position: relative; flex: none; }
.knob { position: absolute; left: 48px; top: -5px; width: 5px; height: 11px; background: #777; }
.zp { width: 8px; height: 8px; flex: none; background: linear-gradient(#444,#444) center/8px 1px no-repeat, linear-gradient(#444,#444) center/1px 8px no-repeat; }
.pct { width: 51px; font-size: 12px; padding-left: 12px; flex: none; white-space: nowrap; }

/* overlays */
.selrange { position: absolute; left: 587px; top: 287px; width: 86px; height: 127px; border: 2px solid #217346; z-index: 3; }
.seldim { position: absolute; left: 589px; top: 313px; width: 82px; height: 99px; background: rgba(70,70,70,.3); z-index: 3; }
.arrow { position: absolute; left: 654px; top: 310px; z-index: 5; filter: drop-shadow(2px 2px 2px rgba(0,0,0,.35)); }
.anno { position: absolute; color: #f00; font-weight: 900; z-index: 6; line-height: 1; font-feature-settings: normal; text-shadow: 0 0 3px #fff, 0 0 3px #fff, 0 0 4px #fff, 0 0 5px #fff, 2px 2px 4px rgba(0,0,0,.25); white-space: nowrap; }
.a20 { left: 693px; top: 300px; font-size: 38px; }
.drag { left: 733px; top: 298px; font-size: 38px; -webkit-text-stroke: 1.500px #f00; }
.a21 { left: 722px; top: 385px; font-size: 38px; }
.a22 { left: 880px; top: 475px; font-size: 38px; }
.pastebtn { position: absolute; left: 668px; top: 408px; width: 44px; height: 34px; background: #88bfa0; border: 7px solid #f00; border-radius: 4px; z-index: 7; display: flex; align-items: center; padding-left: 2px; }
.pastebtn svg { flex: none; }
.caret-d { border: 3px solid transparent; border-top: 3px solid #555; border-bottom: 0; margin-left: 4px; flex: none; }
.fillmenu { position: absolute; left: 674px; top: 438px; width: 184px; height: 93px; background: #fff; border: 1px solid #c6c6c6; box-shadow: 2px 2px 4px rgba(0,0,0,.25); z-index: 4; font-size: 11.500px; letter-spacing: -.1px; color: #555; }
.mi { height: 23px; display: flex; align-items: center; padding-left: 7px; white-space: nowrap; position: relative; }
.mi.hi { background: #d3f0e0; }
.rad { width: 10px; height: 10px; border: 1px solid #555; border-radius: 50%; margin-right: 16px; flex: none; position: relative; background: #fff; }
.rad.chk { border: 0; background: transparent; z-index: 0; }
.rad.chk::before { content: ""; position: absolute; left: -5px; top: -5px; width: 20px; height: 20px; background: #7fb596; border: 1px solid #4f9a6e; z-index: -1; }
.rad.chk i { display: block; width: 10px; height: 10px; border-radius: 50%; background: radial-gradient(circle, #555 0 2px, #fff 2.500px); }
.redbox { position: absolute; left: 671px; top: 481px; width: 190px; height: 31px; border: 7px solid #f00; border-radius: 5px; z-index: 5; }
```
